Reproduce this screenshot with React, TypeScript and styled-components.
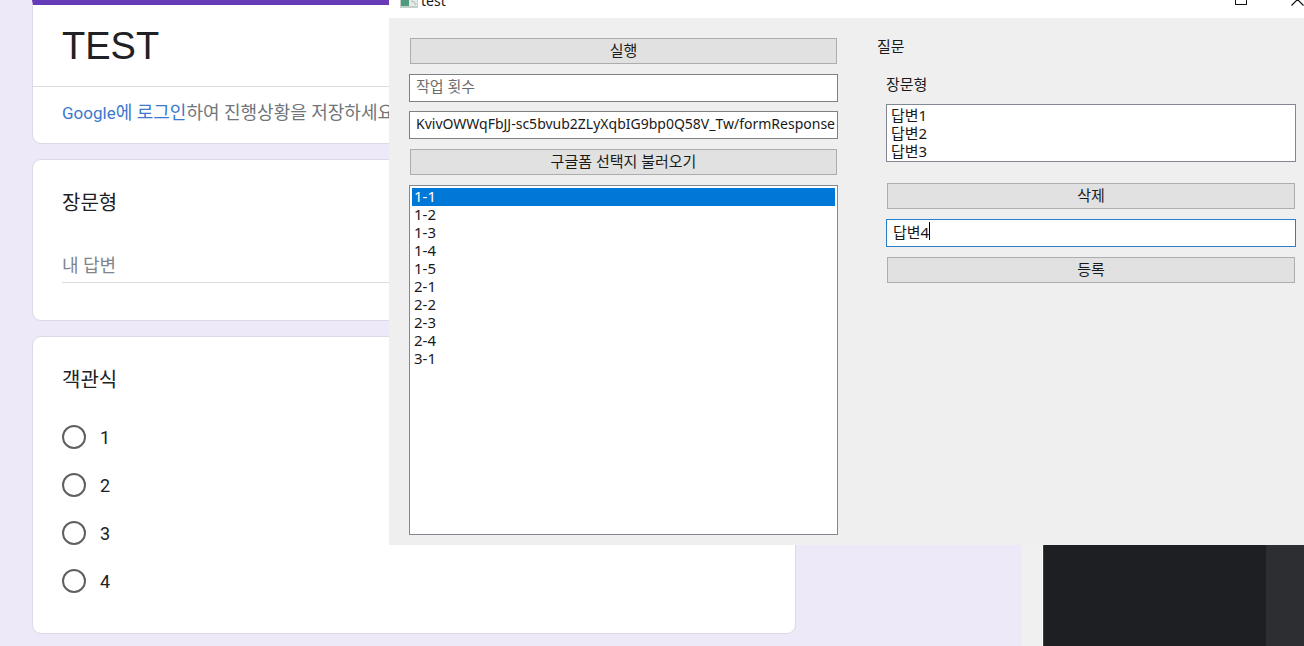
import React, { useState } from "react";
import styled, { createGlobalStyle } from "styled-components";

const GlobalStyle = createGlobalStyle`
  *, *::before, *::after { box-sizing: border-box; }
  html, body { margin: 0; height: 100%; overflow: hidden; }
  button, input { font: inherit; color: inherit; margin: 0; }
`;

const Desktop = styled.div`
  position: relative;
  display: flex;
  height: 100vh;
  overflow: hidden;
  background: #ede9f8;
  font-family: Roboto, "Noto Sans CJK KR", sans-serif;
`;

const FormPage = styled.main`
  flex: 1;
  min-width: 0;
  padding-left: 32px;
`;

const FormColumn = styled.form`
  display: flex;
  flex-direction: column;
  gap: 15px;
  max-width: 764px;
`;

const Card = styled.section`
  background: #fff;
  border: 1px solid #dcd8e4;
  border-radius: 9px;
  padding: 29px 29px 28px;
`;

const HeaderCard = styled(Card)`
  border-top: 5px solid #673ab7;
  border-radius: 0 0 9px 9px;
  padding: 0;
`;

const FormTitle = styled.h1`
  margin: 0;
  padding: 17px 29px 16px;
  border-bottom: 1px solid #dadce0;
  font: 400 38px/48px "Liberation Sans", Arial, sans-serif;
  color: #202124;
`;

const LoginNote = styled.p`
  margin: 0;
  padding: 13px 29px 17px;
  font-size: 18px;
  line-height: 26px;
  color: #70757a;
  white-space: nowrap;
`;

const LoginLink = styled.a`
  color: #3b78ce;
  text-decoration: none;
`;

const Brand = styled.span`
  font-size: 17px;
`;

const QuestionTitle = styled.h2`
  margin: 0;
  font-size: 20px;
  line-height: 28px;
  font-weight: 400;
  color: #202124;
`;

const AnswerInput = styled.input`
  display: block;
  width: 100%;
  height: 34px;
  margin: 32px 0 9px;
  padding: 0;
  border: 0;
  border-bottom: 1px solid #dadce0;
  background: none;
  font-size: 18px;
  outline: none;
  &::placeholder { color: #80858a; opacity: 1; }
`;

const OptionList = styled.div`
  display: flex;
  flex-direction: column;
  gap: 24px;
  padding: 31px 0 12px;
`;

const OptionLabel = styled.label`
  display: flex;
  align-items: center;
  gap: 14px;
  height: 24px;
  font-size: 18px;
  color: #202124;
`;

const Radio = styled.input`
  appearance: none;
  width: 24px;
  height: 24px;
  border: 2px solid #5f6063;
  border-radius: 50%;
  background: #fff;
  &:checked { box-shadow: inset 0 0 0 4px #fff; background: #673ab7; }
`;

const ScrollTrack = styled.div`
  width: 21px;
  background: #f0f0f0;
  border-right: 1px solid #fff;
`;

const EditorPane = styled.aside`
  display: flex;
  width: 261px;
  background: #1e1f22;
  border-left: 1px solid #3a3c3f;
`;

const EditorGutter = styled.div`
  width: 38px;
  margin-left: auto;
  background: #2d2e31;
`;

const Window = styled.section`
  position: absolute;
  top: 0;
  left: 389px;
  right: 0;
  display: flex;
  flex-direction: column;
  overflow: hidden;
  background: #efefef;
  font-family: "Noto Sans", "Noto Sans CJK KR", sans-serif;
  font-size: 15px;
  line-height: 18px;
  color: #1a1a1a;
`;

const TitleBar = styled.header`
  display: flex;
  align-items: center;
  gap: 3px;
  height: 38px;
  margin-top: -20px;
  padding-left: 11px;
  background: #fff;
  font-size: 14px;
`;

const WindowTitle = styled.span`
  padding-top: 3px;
`;

const TitleButtons = styled.div`
  display: flex;
  margin: 0 -21px 0 auto;
`;

const TitleButton = styled.button`
  display: grid;
  place-items: center;
  width: 56px;
  height: 38px;
  padding: 0;
  border: 0;
  background: none;
`;

const WindowBody = styled.div`
  display: grid;
  grid-template-columns: 1fr 1fr;
  gap: 37px;
  padding: 19px 0 10px 20px;
`;

const RunPanel = styled.div`
  display: flex;
  flex-direction: column;
  gap: 9px;
`;

const QuestionPanel = styled.div`
  display: flex;
  flex-direction: column;
  gap: 20px;
  padding-left: 2px;
`;

const QuestionGroup = styled.div`
  display: flex;
  flex-direction: column;
  gap: 11px;
  padding: 0 8px 0 9px;
`;

const ActionGroup = styled(QuestionGroup)`
  gap: 9px;
`;

const Caption = styled.div`
  line-height: 18px;
`;

const PushButton = styled.button`
  height: 26px;
  margin: 1px;
  padding: 0 8px 2px;
  border: 1px solid #adadad;
  background: #e1e1e1;
  line-height: 18px;
`;

const Field = styled.div<{ $active?: boolean }>`
  display: flex;
  align-items: center;
  height: 28px;
  padding: 0 0 4px 6px;
  border: 1px solid ${(p) => (p.$active ? "#2a7fc9" : "#7f8084")};
  background: #fff;
`;

const FieldInput = styled.input<{ $fit?: boolean }>`
  ${(p) => (p.$fit ? "field-sizing: content; caret-color: transparent;" : "flex: 1; min-width: 0;")}
  height: 20px;
  padding: 0;
  border: 0;
  outline: none;
  background: none;
  &::placeholder { color: #6d6d6d; opacity: 1; }
`;

const UrlInput = styled(FieldInput)`
  font-size: 14px;
`;

const Caret = styled.span`
  width: 1px;
  height: 18px;
  background: #000;
`;

const ListBox = styled.ul<{ $tall?: boolean }>`
  margin: 0;
  padding: 2px 2px 0;
  min-height: ${(p) => (p.$tall ? "350px" : "58px")};
  list-style: none;
  border: 1px solid #828790;
  background: #fff;
`;

const ListItem = styled.li<{ $selected: boolean }>`
  height: 18px;
  padding: 0 2px;
  line-height: 16px;
  cursor: default;
  background: ${(p) => (p.$selected ? "#0078d7" : "transparent")};
  color: ${(p) => (p.$selected ? "#fff" : "inherit")};
`;

const choices = ["1-1", "1-2", "1-3", "1-4", "1-5", "2-1", "2-2", "2-3", "2-4", "3-1"];
const answers = ["답변1", "답변2", "답변3"];

function SelectableList({ label, items, initial, tall }: { label: string; items: string[]; initial?: string; tall?: boolean }) {
  const [selected, setSelected] = useState(initial);
  return (
    <ListBox role="listbox" aria-label={label} tabIndex={0} $tall={tall}>
      {items.map((item) => (
        <ListItem key={item} role="option" aria-selected={item === selected} $selected={item === selected} onClick={() => setSelected(item)}>
          {item}
        </ListItem>
      ))}
    </ListBox>
  );
}

function AppIcon() {
  return (
    <svg width="18" height="18" viewBox="0 0 18 18" aria-hidden="true">
      <rect width="18" height="18" fill="#c3cfcb" />
      <rect x="1" y="1" width="8" height="15" fill="#4f9a7c" />
      <rect x="9" y="1" width="8" height="15" fill="#e6ebea" />
      <path d="M11 11l3 1 2 3" stroke="#c3cbc9" strokeWidth="1.5" fill="none" />
    </svg>
  );
}

export default function App() {
  const [url, setUrl] = useState("KvivOWWqFbJJ-sc5bvub2ZLyXqbIG9bp0Q58V_Tw/formResponse");
  const [answer, setAnswer] = useState("답변4");
  return (
    <>
      <GlobalStyle />
      <Desktop>
        <FormPage>
          <FormColumn>
            <HeaderCard>
              <FormTitle>TEST</FormTitle>
              <LoginNote>
                <LoginLink href="#login"><Brand>Google</Brand>에 로그인</LoginLink>하여 진행상황을 저장하세요
              </LoginNote>
            </HeaderCard>
            <Card>
              <QuestionTitle id="long-answer">장문형</QuestionTitle>
              <AnswerInput placeholder="내 답변" aria-labelledby="long-answer" />
            </Card>
            <Card>
              <QuestionTitle id="multiple-choice">객관식</QuestionTitle>
              <OptionList role="radiogroup" aria-labelledby="multiple-choice">
                {["1", "2", "3", "4"].map((value) => (
                  <OptionLabel key={value}>
                    <Radio type="radio" name="choice" value={value} />
                    {value}
                  </OptionLabel>
                ))}
              </OptionList>
            </Card>
          </FormColumn>
        </FormPage>
        <ScrollTrack />
        <EditorPane>
          <EditorGutter />
        </EditorPane>

        <Window>
          <TitleBar>
            <AppIcon />
            <WindowTitle>test</WindowTitle>
            <TitleButtons>
              <TitleButton aria-label="최대화">
                <svg width="12" height="12" viewBox="0 0 12 12"><rect x="0.5" y="0.5" width="11" height="11" fill="none" stroke="#111" /></svg>
              </TitleButton>
              <TitleButton aria-label="닫기">
                <svg width="13" height="13" viewBox="0 0 13 13"><path d="M.5.5l12 12M12.500.5l-12 12" stroke="#111" strokeWidth="1.200" /></svg>
              </TitleButton>
            </TitleButtons>
          </TitleBar>
          <WindowBody>
            <RunPanel>
              <PushButton>실행</PushButton>
              <Field><FieldInput placeholder="작업 횟수" aria-label="작업 횟수" /></Field>
              <Field><UrlInput value={url} onChange={(e) => setUrl(e.target.value)} aria-label="URL" /></Field>
              <PushButton>구글폼 선택지 불러오기</PushButton>
              <SelectableList label="선택지" items={choices} initial="1-1" tall />
            </RunPanel>
            <QuestionPanel>
              <Caption>질문</Caption>
              <QuestionGroup>
                <Caption>장문형</Caption>
                <SelectableList label="장문형" items={answers} />
              </QuestionGroup>
              <ActionGroup>
                <PushButton>삭제</PushButton>
                <Field $active>
                  <FieldInput $fit value={answer} onChange={(e) => setAnswer(e.target.value)} aria-label="답변" />
                  <Caret />
                </Field>
                <PushButton>등록</PushButton>
              </ActionGroup>
            </QuestionPanel>
          </WindowBody>
        </Window>
      </Desktop>
    </>
  );
}
